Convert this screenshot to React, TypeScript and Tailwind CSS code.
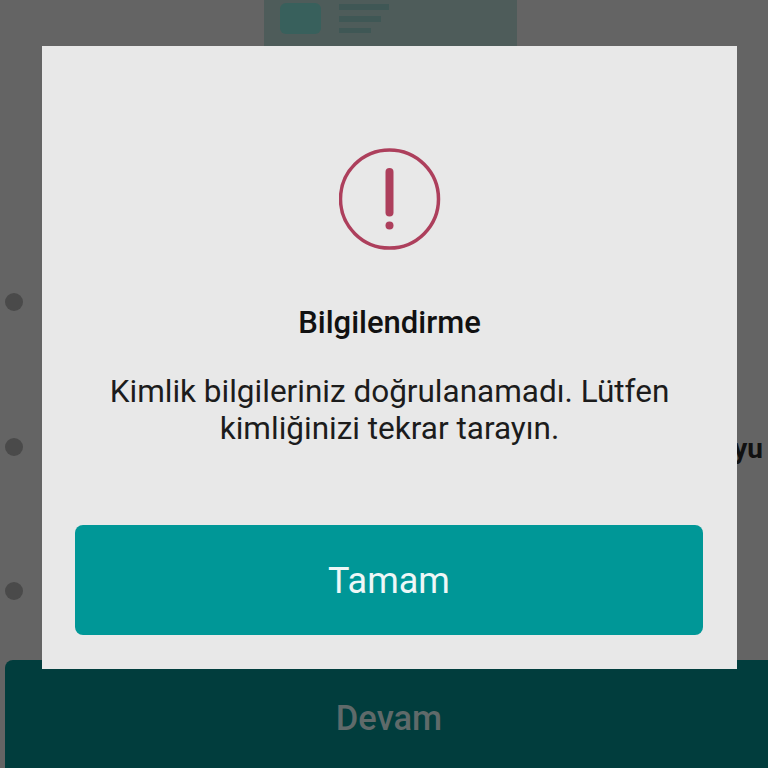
const App = () => {
  return (
    <div className="relative h-[768px] w-[768px] overflow-hidden bg-[#646464] font-['Roboto',sans-serif]">
      {/* Dimmed page behind the dialog */}
      <div className="flex h-full flex-col">
        <div className="ml-[264px] flex h-[46px] w-[253px] items-start gap-[18px] bg-[#4e5c5a] pl-[16px] pt-[3px]">
          <div className="h-[31px] w-[41px] rounded-md bg-[#38605c]" />
          <div className="flex flex-col gap-[6px] pt-[1px]">
            <div className="h-[6px] w-[50px] bg-[#3f5755]" />
            <div className="h-[6px] w-[42px] bg-[#3f5755]" />
            <div className="h-[5px] w-[32px] bg-[#3f5755]" />
          </div>
        </div>
        <div className="flex flex-1 flex-col pl-[5px] pt-[247px]">
          <div className="h-[145px]">
            <div className="h-[18px] w-[18px] rounded-full bg-[#4a4a4a]" />
          </div>
          <div className="flex h-[144px] items-start justify-between pr-[5px]">
            <div className="h-[18px] w-[18px] rounded-full bg-[#4a4a4a]" />
            <span className="-mt-[5px] text-[28px] font-bold leading-[32px] text-[#111111]">yu</span>
          </div>
          <div className="h-[6px]">
            <div className="h-[18px] w-[18px] rounded-full bg-[#4a4a4a]" />
          </div>
        </div>
        <div className="ml-[5px] flex h-[108px] w-[768px] shrink-0 items-center justify-center rounded-tl-lg bg-[#013d3d] pt-[9px]">
          <span className="text-[34.5px] font-medium text-[#5f6a6a]">Devam</span>
        </div>
      </div>

      {/* Dialog */}
      <div className="absolute left-[42px] top-[46px] flex h-[623px] w-[695px] flex-col items-center bg-[#e8e8e8] px-[33px] pt-[102px]">
        <svg width="102" height="102" viewBox="0 0 102 102" fill="none">
          <circle cx="50.5" cy="51" r="49" stroke="#ad3f5c" strokeWidth="3.5" />
          <line x1="50.5" y1="24" x2="50.5" y2="64.5" stroke="#ad3f5c" strokeWidth="8" strokeLinecap="round" />
          <circle cx="50.5" cy="77.5" r="4" fill="#ad3f5c" />
        </svg>
        <h1 className="mt-[55px] text-[31px] font-medium leading-[36px] text-[#111111]">Bilgilendirme</h1>
        <p className="mt-[32px] w-[600px] text-center text-[31.5px] leading-[37px] text-[#1c1c1c]">
          Kimlik bilgileriniz doğrulanamadı. Lütfen kimliğinizi tekrar tarayın.
        </p>
        <button className="mt-[78px] flex h-[110px] w-[628px] shrink-0 items-center justify-center self-start rounded-lg bg-[#009797] pt-[1px] text-[36px] text-[#eef7f7]">
          Tamam
        </button>
      </div>
    </div>
  );
};

export default App;
